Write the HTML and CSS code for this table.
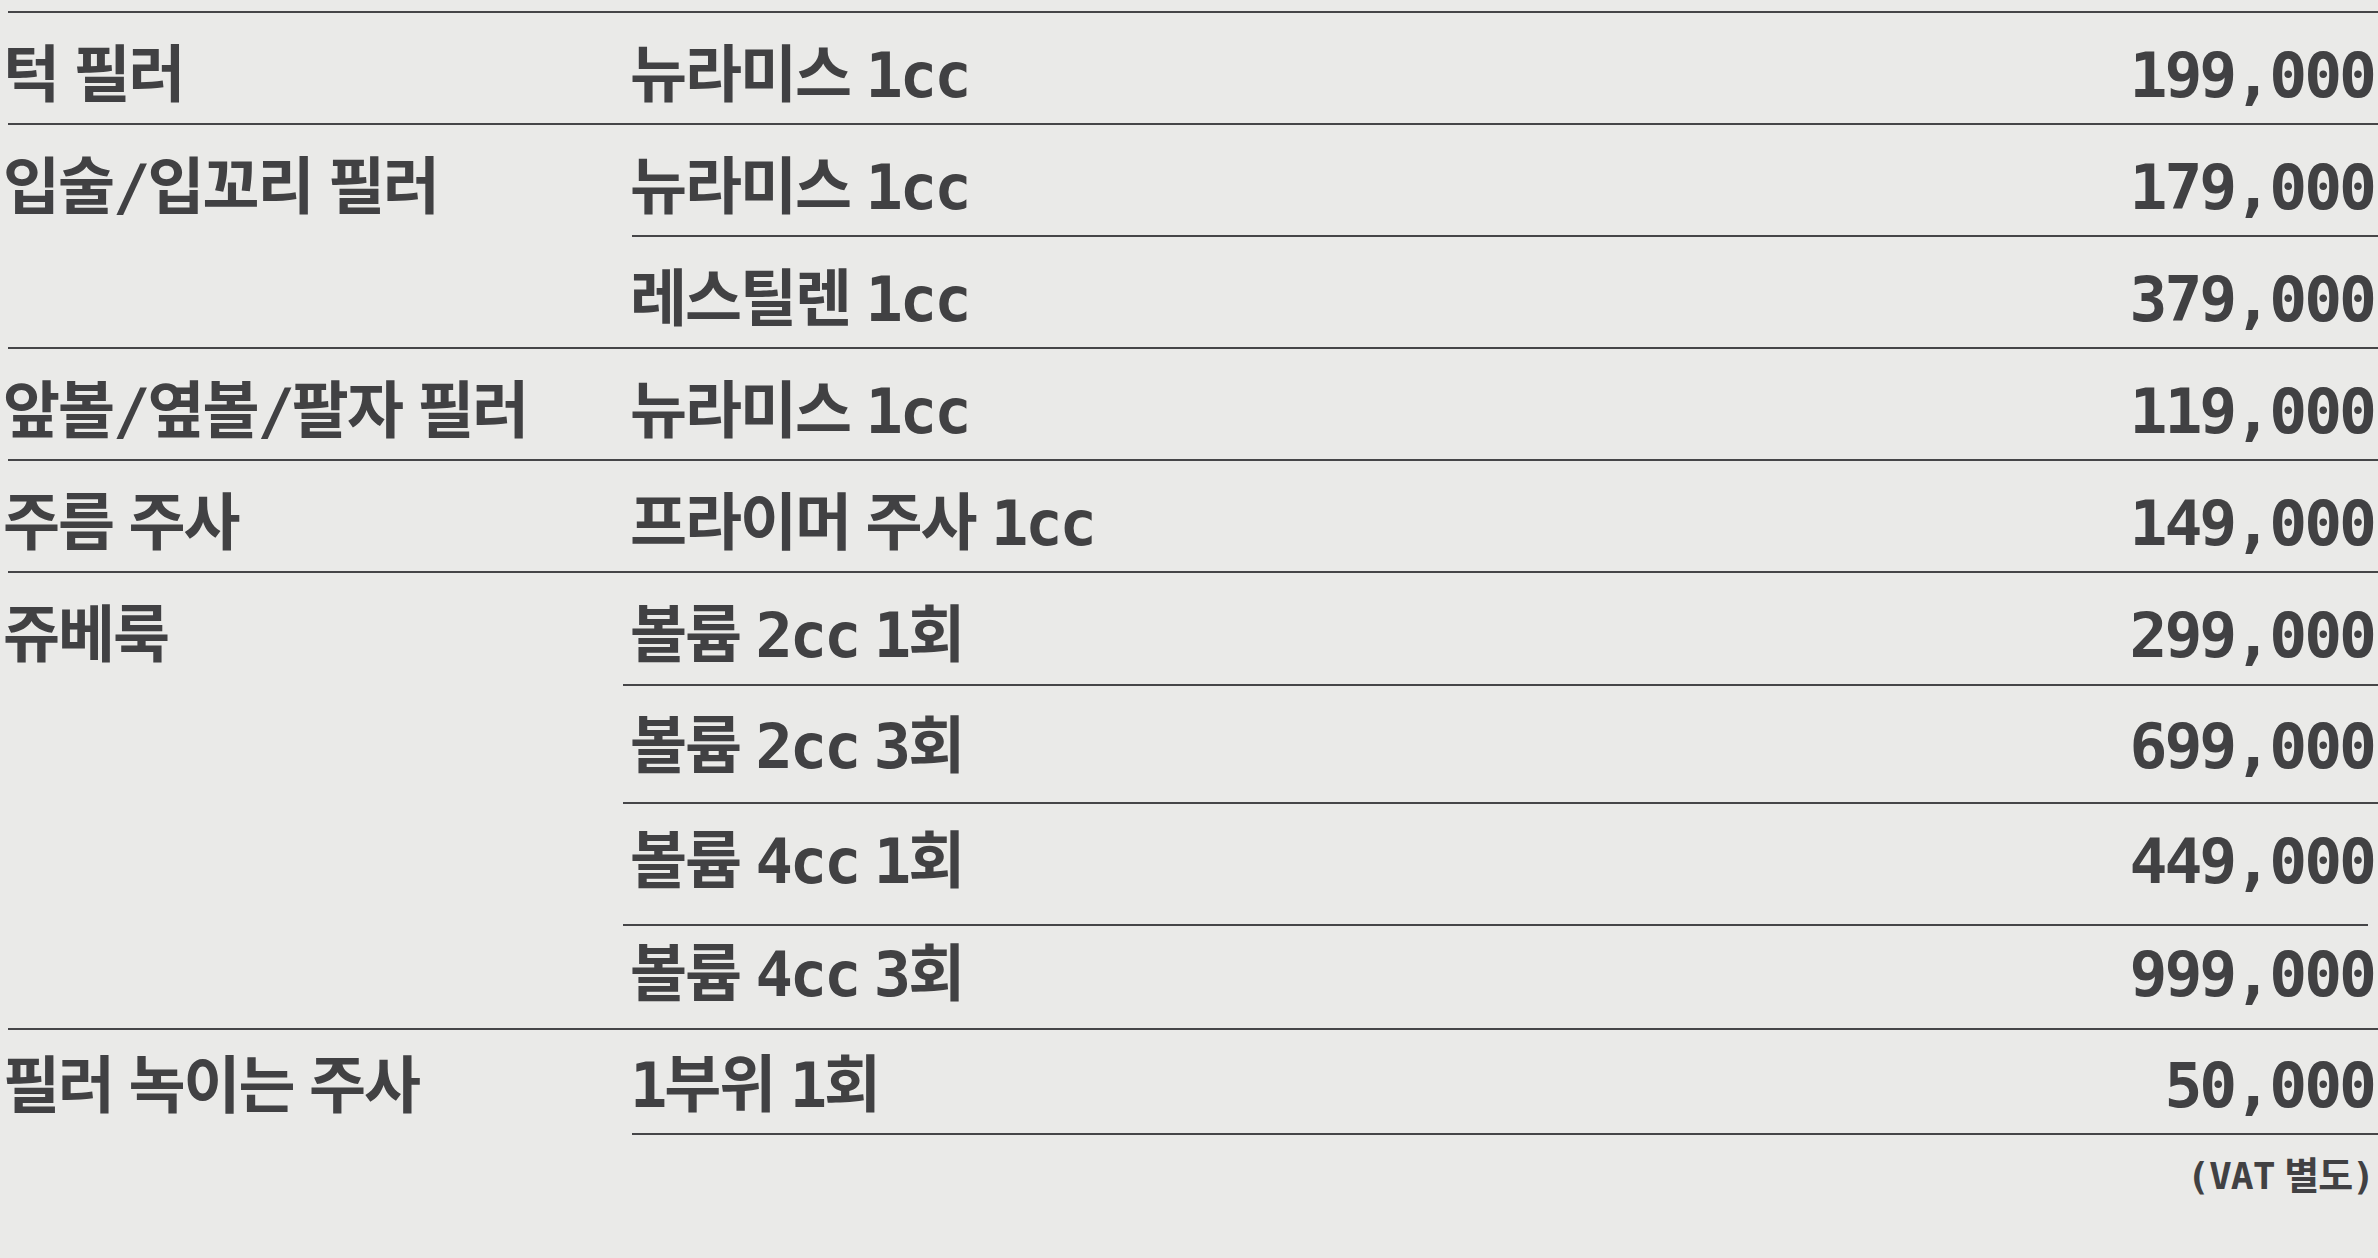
FILE: index.html
```html
<!DOCTYPE html>
<html lang="ko">
<head>
<meta charset="utf-8">
<title>필러 가격표</title>
<link rel="stylesheet" href="styles.css">
</head>
<body>
<main class="menu">
  <section class="group">
    <h3 class="cat">턱 필러</h3>
    <ul class="items">
      <li class="item"><span class="name">뉴라미스 <span class="mono">1cc</span></span><span class="price">199,000</span></li>
    </ul>
  </section>
  <section class="group">
    <h3 class="cat">입술<span class="mono">/</span>입꼬리 필러</h3>
    <ul class="items">
      <li class="item"><span class="name">뉴라미스 <span class="mono">1cc</span></span><span class="price">179,000</span></li>
      <li class="item"><span class="name">레스틸렌 <span class="mono">1cc</span></span><span class="price">379,000</span></li>
    </ul>
  </section>
  <section class="group">
    <h3 class="cat">앞볼<span class="mono">/</span>옆볼<span class="mono">/</span>팔자 필러</h3>
    <ul class="items">
      <li class="item"><span class="name">뉴라미스 <span class="mono">1cc</span></span><span class="price">119,000</span></li>
    </ul>
  </section>
  <section class="group">
    <h3 class="cat">주름 주사</h3>
    <ul class="items">
      <li class="item"><span class="name">프라이머 주사 <span class="mono">1cc</span></span><span class="price">149,000</span></li>
    </ul>
  </section>
  <section class="group group--wide">
    <h3 class="cat">쥬베룩</h3>
    <ul class="items">
      <li class="item item--a"><span class="name">볼륨 <span class="mono">2cc</span> <span class="mono">1</span>회</span><span class="price">299,000</span></li>
      <li class="item item--b"><span class="name">볼륨 <span class="mono">2cc</span> <span class="mono">3</span>회</span><span class="price">699,000</span></li>
      <li class="item item--c"><span class="name">볼륨 <span class="mono">4cc</span> <span class="mono">1</span>회</span><span class="price">449,000</span></li>
      <li class="item item--d"><span class="name">볼륨 <span class="mono">4cc</span> <span class="mono">3</span>회</span><span class="price">999,000</span></li>
    </ul>
  </section>
  <section class="group group--last">
    <h3 class="cat">필러 녹이는 주사</h3>
    <ul class="items">
      <li class="item item--last"><span class="name"><span class="mono">1</span>부위 <span class="mono">1</span>회</span><span class="price">50,000</span></li>
    </ul>
  </section>
  <p class="note"><span class="mono">(VAT</span> 별도<span class="mono">)</span></p>
</main>
</body>
</html>
```

FILE: styles.css
```css
html, body {
  margin: 0;
  padding: 0;
  background: #eaeae8;
}

body {
  color: #414143;
  font-family: "Noto Sans CJK KR", "Noto Sans", sans-serif;
  font-weight: 700;
  width: 2378px;
  overflow: hidden;
}

.menu {
  padding-top: 11px;
}

.mono {
  font-family: "DejaVu Sans Mono", "Liberation Mono", monospace;
  letter-spacing: -3px;
}

.group {
  display: grid;
  grid-template-columns: 624px 1fr;
  margin-left: 8px;
  border-top: 2px solid #464648;
}

.cat {
  margin: 0 0 0 -5px;
  padding-top: 26px;
  font-size: 62px;
  line-height: 62px;
  font-weight: 700;
  letter-spacing: -2px;
  white-space: nowrap;
}

.items {
  list-style: none;
  margin: 0;
  padding: 0;
}

.item {
  display: flex;
  justify-content: space-between;
  align-items: baseline;
  box-sizing: border-box;
  height: 110px;
  padding: 26px 4px 0 0;
  font-size: 62px;
  line-height: 62px;
  letter-spacing: -2px;
  white-space: nowrap;
}

.item + .item {
  height: 112px;
  border-top: 2px solid #464648;
}

.name {
  margin-left: -2px;
}

.price {
  font-family: "DejaVu Sans Mono", "Liberation Mono", monospace;
  font-size: 63px;
  letter-spacing: -3px;
}

/* 쥬베룩: sub-rules start a little further left */
.group--wide .items {
  margin-left: -9px;
}

.group--wide .item {
  padding-left: 9px;
}

.item.item--a { height: 111px; }
.item.item--b { height: 118px; padding-top: 24px; }
.item.item--c { height: 122px; padding-top: 21px; }
.item.item--d { height: 104px; padding-top: 12px; margin-right: 10px; padding-right: 0; }
.item.item--d .price { margin-right: -6px; }

.group--last .cat {
  padding-top: 20px;
}

.item.item--last {
  height: 105px;
  padding-top: 19px;
  border-bottom: 2px solid #464648;
}

.note {
  margin: 0;
  padding: 19px 4px 0 0;
  text-align: right;
  font-size: 38px;
  line-height: 38px;
  letter-spacing: -1px;
}

.note .mono {
  letter-spacing: -1px;
}
```
